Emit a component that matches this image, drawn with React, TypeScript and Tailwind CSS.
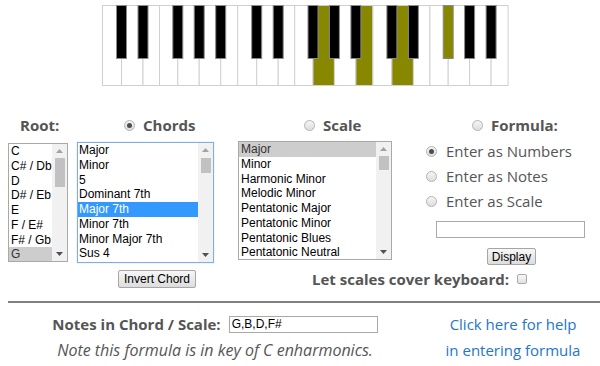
const WHITE = [0, 19, 40.5, 57, 75.3, 96.7, 118.2, 135.2];
const BLACK = [19, 40.5, 75.3, 96.7, 118.2];
const OCTAVE = 135.2;
const OLIVE = "#888800";

// notes of G major 7th: G and B (octave 2), D (octave 3) plus F# (octave 3)
const litWhite = ["1-4", "1-6", "2-1"];
const litBlack = ["2-2"];

const Keyboard = () => {
  const whites = [];
  const blacks = [];
  for (let o = 0; o < 3; o++) {
    for (let i = 0; i < 7; i++) {
      const key = `${o}-${i}`;
      whites.push(
        <rect
          key={key}
          x={0.5 + o * OCTAVE + WHITE[i]}
          y={0.5}
          width={WHITE[i + 1] - WHITE[i]}
          height={80}
          fill={litWhite.includes(key) ? OLIVE : "#ffffff"}
          stroke="#d0d0d0"
        />
      );
    }
    BLACK.forEach((c, i) => {
      const key = `${o}-${i}`;
      blacks.push(
        <rect
          key={key}
          x={0.5 + o * OCTAVE + c - 5}
          y={0.5}
          width={10}
          height={53}
          fill={litBlack.includes(key) ? OLIVE : "#000000"}
          stroke="#8a8a8a"
        />
      );
    });
  }
  return (
    <svg width="407" height="82" className="ml-[102px] mt-[5px] block">
      {whites}
      {blacks}
    </svg>
  );
};

const Radio = ({ checked = false }: { checked?: boolean }) => (
  <span className="flex h-[11px] w-[11px] shrink-0 items-center justify-center rounded-full border border-[#b3b3b3] bg-linear-to-b from-[#f5f5f5] to-[#dedede]">
    {checked && <span className="h-[5px] w-[5px] rounded-full bg-[#4d4d4d]" />}
  </span>
);

const Scrollbar = ({ thumb }: { thumb: string }) => (
  <div className="flex w-[15px] shrink-0 flex-col items-center bg-[#f1f1f1]">
    <svg width="7" height="4" className="mt-[5px] block">
      <polygon points="0,4 3.5,0 7,4" fill="#a3a3a3" />
    </svg>
    <div className={`w-[10px] bg-[#c1c1c1] ${thumb}`} />
    <svg width="7" height="4" className="mb-[5px] mt-auto block">
      <polygon points="0,0 7,0 3.5,4" fill="#505050" />
    </svg>
  </div>
);

type ListProps = {
  items: string[];
  selected: number;
  box: string;
  thumb: string;
  active?: boolean;
  pad: string;
};

const ListBox = ({ items, selected, box, thumb, active, pad }: ListProps) => (
  <div className={`flex overflow-hidden border bg-white font-['Liberation_Sans',Arial,sans-serif] text-[12px] ${box}`}>
    <div className="flex-1">
      {items.map((item, i) => (
        <div
          key={item}
          className={`h-[14.75px] whitespace-nowrap leading-[14.75px] ${pad} ${
            i === selected
              ? active
                ? "bg-[#3399ff] text-white"
                : "bg-[#cdcdcd] text-[#333]"
              : "text-black"
          }`}
        >
          {item}
        </div>
      ))}
    </div>
    <Scrollbar thumb={thumb} />
  </div>
);

const Button = ({ label, size }: { label: string; size: string }) => (
  <button
    className={`block rounded-[2px] border border-[#a6a6a6] bg-linear-to-b from-[#f7f7f7] to-[#dddddd] font-['Liberation_Sans',Arial,sans-serif] text-[12px] leading-none text-black ${size}`}
  >
    {label}
  </button>
);

const App = () => {
  const roots = ["C", "C# / Db", "D", "D# / Eb", "E", "F / E#", "F# / Gb", "G"];
  const chords = ["Major", "Minor", "5", "Dominant 7th", "Major 7th", "Minor 7th", "Minor Major 7th", "Sus 4"];
  const scales = [
    "Major",
    "Minor",
    "Harmonic Minor",
    "Melodic Minor",
    "Pentatonic Major",
    "Pentatonic Minor",
    "Pentatonic Blues",
    "Pentatonic Neutral",
  ];
  const modes = ["Enter as Numbers", "Enter as Notes", "Enter as Scale"];

  return (
    <div className="h-[366px] w-[600px] overflow-hidden bg-white font-['Open_Sans',sans-serif] text-[#555]">
      <Keyboard />

      <div className="mt-[28px] flex">
        <div className="ml-[8px] w-[60px]">
          <div className="flex h-[20px] items-center pl-[12px] text-[15px] font-bold">Root:</div>
          <ListBox
            items={roots}
            selected={7}
            box="mt-[8px] h-[119px] w-[60px] border-[#a9a9a9]"
            thumb="mt-[5px] h-[29px]"
            pad="pl-[2px]"
          />
        </div>

        <div className="ml-[9px] w-[137px]">
          <div className="flex h-[20px] items-center gap-[8px] pl-[47px] text-[15px] font-bold">
            <Radio checked />
            Chords
          </div>
          <ListBox
            items={chords}
            selected={4}
            active
            box="mt-[7px] h-[121px] w-[137px] border-[#7eb0e6] shadow-[0_0_1px_#9cc3ee]"
            thumb="mt-[6px] h-[15px]"
            pad="pl-[1px]"
          />
        </div>

        <div className="ml-[24px] w-[154px]">
          <div className="flex h-[20px] items-center gap-[8px] pl-[66px] text-[15px] font-bold">
            <Radio />
            Scale
          </div>
          <ListBox
            items={scales}
            selected={0}
            box="mt-[6px] h-[119px] w-[154px] border-[#a9a9a9]"
            thumb="mt-[5px] h-[14px]"
            pad="pl-[2px]"
          />
        </div>

        <div className="ml-[34px] w-[160px]">
          <div className="flex h-[20px] items-center gap-[8px] pl-[46px] text-[15px] font-bold">
            <Radio />
            Formula:
          </div>
          <div className="mt-[4px] flex flex-col">
            {modes.map((m, i) => (
              <div key={m} className="flex h-[25px] items-center gap-[9px] text-[15px]">
                <Radio checked={i === 0} />
                {m}
              </div>
            ))}
          </div>
          <div className="ml-[10px] mt-[7px] h-[17px] w-[149px] border border-[#a9a9a9] bg-white" />
          <Button label="Display" size="ml-[61px] mt-[10px] h-[17px] w-[49px]" />
        </div>
      </div>

      <div className="mt-[5px] flex h-[18px] items-center">
        <Button label="Invert Chord" size="ml-[118px] h-[18px] w-[78px]" />
        <div className="ml-[116px] flex items-center gap-[8px] text-[15px] font-bold">
          Let scales cover keyboard:
          <span className="h-[10px] w-[10px] rounded-[2px] border border-[#a9a9a9] bg-linear-to-b from-[#f7f7f7] to-[#e2e2e2]" />
        </div>
      </div>

      <div className="ml-[8px] mt-[13px] h-[2px] bg-[#808080]" />

      <div className="mt-[8px] flex">
        <div className="flex w-[430px] flex-col items-center">
          <div className="flex h-[26px] items-center text-[15px] font-bold">
            Notes in Chord / Scale:
            <div className="ml-[8px] flex h-[17px] w-[149px] items-center border border-[#a9a9a9] bg-white pl-[2px] font-['Liberation_Sans',Arial,sans-serif] text-[12px] font-normal text-black">
              G,B,D,F#
            </div>
          </div>
          <div className="flex h-[26px] items-center text-[16px] italic">
            Note this formula is in key of C enharmonics.
          </div>
        </div>
        <div className="flex flex-1 flex-col items-center pr-[4px] text-[15px] text-[#2376cc]">
          <a className="flex h-[26px] items-center">Click here for help</a>
          <a className="flex h-[26px] items-center">in entering formula</a>
        </div>
      </div>
    </div>
  );
};

export default App;
